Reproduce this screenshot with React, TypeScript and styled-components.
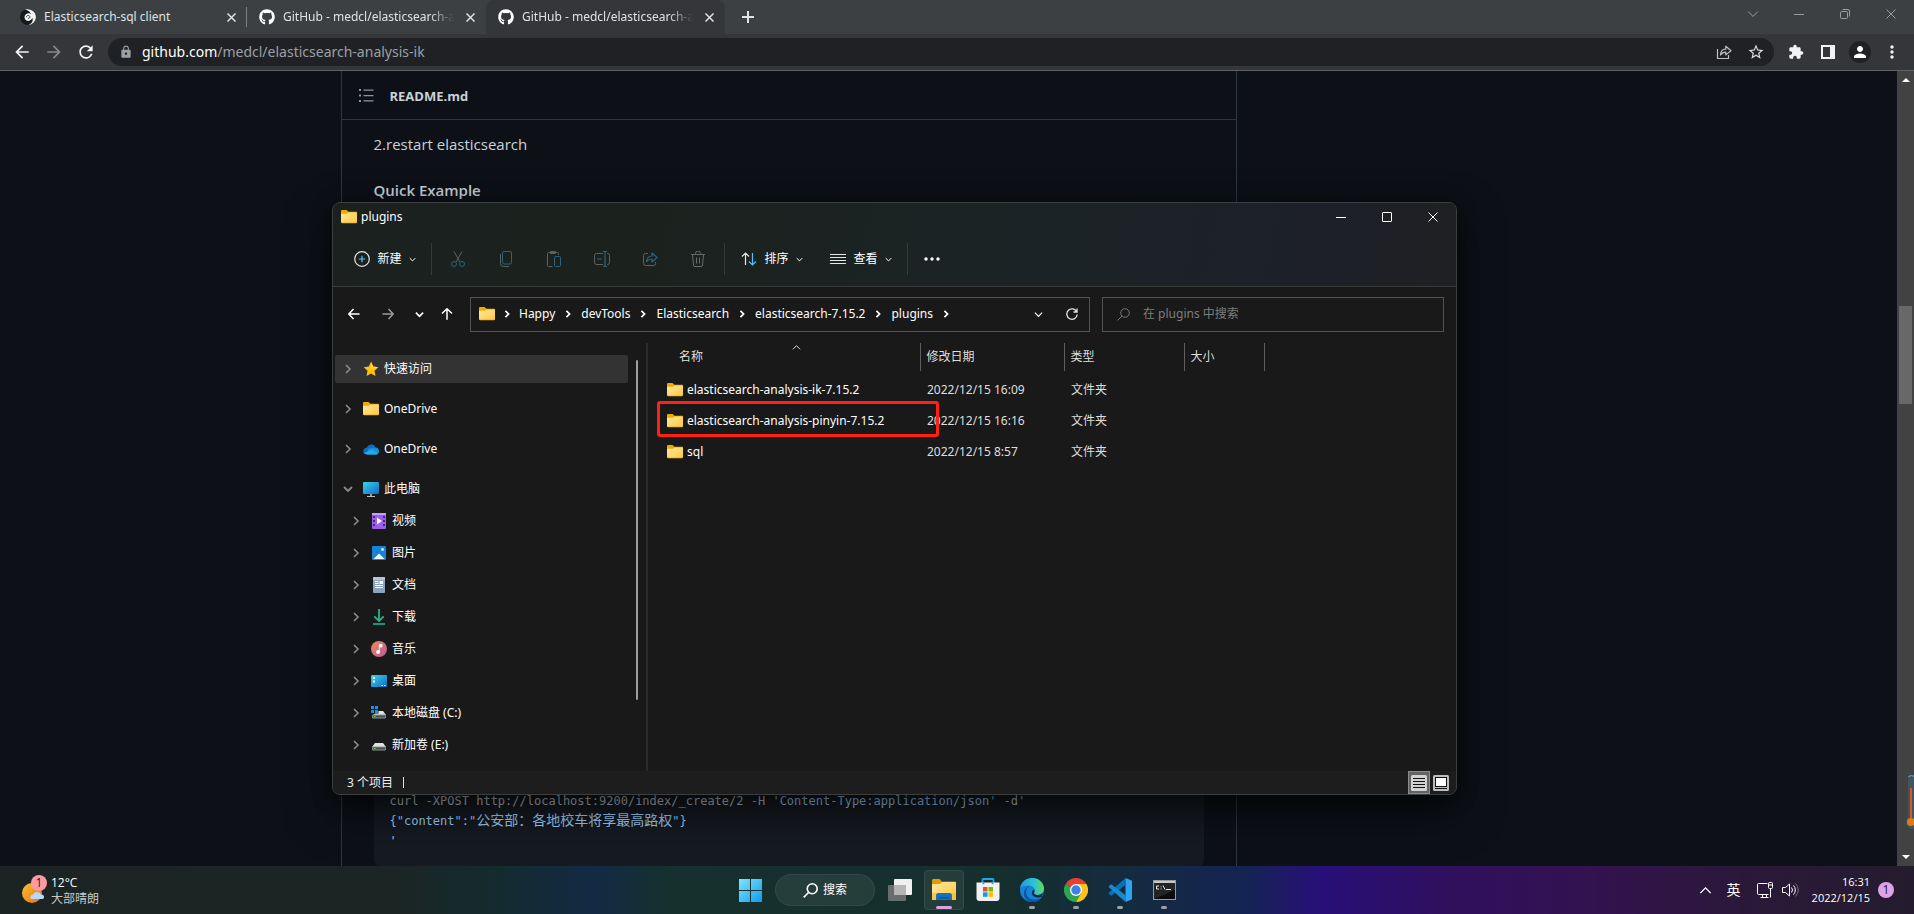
import React from 'react';
import styled, { createGlobalStyle, css } from 'styled-components';
import { FaGithub } from 'react-icons/fa';
import {
  MdArrowBack,
  MdArrowForward,
  MdExtension,
  MdLock,
  MdMoreVert,
  MdPerson,
  MdRefresh,
  MdStarBorder,
} from 'react-icons/md';

const GlobalStyle = createGlobalStyle`
  *, *::before, *::after { box-sizing: border-box; }
  body {
    margin: 0;
    background: #0d1117;
    color: #fff;
    font: 12px/16px "Noto Sans", "Noto Sans CJK SC", sans-serif;
  }
  button, input { font: inherit; color: inherit; }
  button { margin: 0; padding: 0; border: 0; background: none; cursor: default; }
  svg { display: block; flex: none; }
`;

const Screen = styled.div`
  display: flex;
  flex-direction: column;
  min-height: 100vh;
`;

/* ---------- Browser chrome ---------- */

const TabStrip = styled.div`
  display: flex;
  align-items: stretch;
  height: 34px;
  padding-left: 8px;
  background: #3c4043;
`;

const Tab = styled.div<{ $active?: boolean; $divided?: boolean }>`
  position: relative;
  display: flex;
  align-items: center;
  gap: 8px;
  flex: 0 1 239px;
  min-width: 0;
  padding: 0 8px 0 12px;
  color: #dfe1e5;
  ${(p) =>
    p.$active &&
    css`
      background: #35363a;
      border-radius: 8px 8px 0 0;
    `}
  ${(p) =>
    p.$divided &&
    css`
      &::after {
        content: '';
        position: absolute;
        right: 0;
        top: 7px;
        width: 1px;
        height: 20px;
        background: #7b7e82;
      }
    `}
`;

const TabTitle = styled.button<{ $fade?: boolean }>`
  flex: 1;
  min-width: 0;
  overflow: hidden;
  white-space: nowrap;
  text-align: left;
  ${(p) => p.$fade && css`mask-image: linear-gradient(90deg, #000 86%, transparent);`}
`;

const TinyButton = styled.button`
  display: grid;
  place-items: center;
  width: 16px;
  height: 16px;
`;

const NewTab = styled.button`
  display: grid;
  place-items: center;
  width: 28px;
  height: 34px;
  margin-left: 9px;
  color: #dfe1e5;
`;

const WindowControls = styled.div<{ $muted?: boolean }>`
  display: flex;
  margin-left: auto;
  color: ${(p) => (p.$muted ? '#9a9da0' : '#fff')};
`;

const ControlButton = styled.button`
  display: grid;
  place-items: center;
  width: 46px;
  height: 28px;
`;

const NavBar = styled.div`
  display: flex;
  align-items: center;
  height: 37px;
  padding: 0 6px 1px 6px;
  background: #35363a;
  border-bottom: 1px solid #5f6368;
  color: #f1f3f4;
`;

const NavButton = styled.button<{ $dim?: boolean }>`
  display: grid;
  place-items: center;
  width: 32px;
  height: 28px;
  color: ${(p) => (p.$dim ? '#86888b' : 'inherit')};
`;

const Omnibox = styled.div`
  display: flex;
  align-items: center;
  flex: 1;
  height: 28px;
  margin: 0 6px;
  padding: 0 2px 0 11px;
  border-radius: 14px;
  background: #202124;
  color: #9aa0a6;
`;

const Address = styled.button`
  flex: 1;
  padding-left: 9px;
  text-align: left;
  font-size: 14px;
  line-height: 20px;
  color: #9aa0a6;
  & > b {
    font-weight: 400;
    color: #fff;
  }
`;

const Avatar = styled.span`
  display: grid;
  place-items: center;
  width: 22px;
  height: 22px;
  border-radius: 50%;
  background: #202124;
`;

/* ---------- Page content ---------- */

const Viewport = styled.div`
  position: relative;
  display: flex;
  flex: 1;
  min-height: 0;
`;

const PageArea = styled.main`
  display: grid;
  grid-template-columns: minmax(0, 896px) 296px;
  column-gap: 24px;
  justify-content: center;
  flex: 1;
  font-family: "Open Sans", "Noto Sans CJK SC", sans-serif;
`;

const Readme = styled.article`
  display: flex;
  flex-direction: column;
  border: 1px solid #30363d;
  border-width: 0 1px;
  color: #c9d1d9;
`;

const ReadmeBar = styled.header`
  display: flex;
  align-items: center;
  gap: 16px;
  height: 49px;
  padding-left: 17px;
  border-bottom: 1px solid #30363d;
  color: #8b949e;
`;

const ReadmeName = styled.h2`
  margin: 0;
  padding-top: 2px;
  font-size: 13px;
  line-height: 20px;
  font-weight: 700;
  color: #c9d1d9;
`;

const ReadmeBody = styled.div`
  display: flex;
  flex-direction: column;
  flex: 1;
  padding: 12px 32px 0;
`;

const Paragraph = styled.p`
  margin: 0;
  font-size: 15px;
  line-height: 24px;
`;

const Heading = styled.h3`
  margin: 24px 0;
  font-size: 15px;
  line-height: 20px;
  font-weight: 600;
`;

const CodeBlock = styled.pre`
  margin: auto 0 0;
  padding: 16px 16px 15px;
  border-radius: 6px;
  background: #161b22;
  font: 12px/20px "DejaVu Sans Mono", "Noto Sans CJK SC", monospace;
  color: #a5d6ff;
  & > span {
    color: #c9d1d9;
  }
`;

const Han = styled.b`
  font-weight: 400;
  font-size: 14px;
  line-height: 16px;
`;

const ScrollTrack = styled.div`
  display: flex;
  flex-direction: column;
  align-items: center;
  justify-content: space-between;
  width: 17px;
  padding: 7px 0;
  background: #424242;
`;

const ScrollArrow = styled.span<{ $down?: boolean }>`
  border: 4px solid transparent;
  border-top-width: ${(p) => (p.$down ? 4 : 0)}px;
  border-bottom-width: ${(p) => (p.$down ? 0 : 4)}px;
  border-top-color: ${(p) => (p.$down ? '#fff' : 'transparent')};
  border-bottom-color: ${(p) => (p.$down ? 'transparent' : '#fff')};
`;

const ScrollLane = styled.div`
  display: flex;
  flex-direction: column;
  flex: 1;
`;

const ScrollThumb = styled.span`
  width: 13px;
  height: 98px;
  margin-top: 224px;
  background: #686868;
`;

const Thermometer = styled.div`
  position: absolute;
  right: 0;
  bottom: 36px;
  width: 9px;
  height: 56px;
  overflow: hidden;
`;

/* ---------- Explorer window ---------- */

const windowFrame = css`
  position: absolute;
  left: 332px;
  top: 131px;
  width: min(1125px, calc(100% - 340px));
  height: 593px;
  border-radius: 8px;
`;

const Explorer = styled.section`
  ${windowFrame}
  display: flex;
  flex-direction: column;
  overflow: hidden;
  border: 1px solid #3b3f40;
  background: #191919;
`;

const ExplorerShadow = styled.div`
  ${windowFrame}
  box-shadow: 0 18px 44px rgba(0, 0, 0, 0.6), 0 2px 20px rgba(0, 0, 0, 0.4);
`;

const ExplorerTop = styled.div`
  height: 84px;
  border-bottom: 1px solid #3a3b3b;
  background: linear-gradient(100deg, #1c2120 0%, #1b221d 22%, #1b2323 50%, #1c2227 72%, #1d202a 86%, #202023 100%);
`;

const TitleRow = styled.div`
  display: flex;
  align-items: flex-start;
`;

const WindowTitle = styled.div`
  display: flex;
  align-items: center;
  gap: 4px;
  padding: 6px 0 0 8px;
`;

const CommandBar = styled.div`
  display: flex;
  align-items: center;
  height: 56px;
  padding-left: 8px;
`;

const Command = styled.button<{ $w: number; $off?: boolean }>`
  display: flex;
  align-items: center;
  justify-content: center;
  gap: 7px;
  width: ${(p) => p.$w}px;
  height: 32px;
  opacity: ${(p) => (p.$off ? 0.5 : 1)};
`;

const CommandDivider = styled.span`
  width: 1px;
  height: 32px;
  margin: 0 2px;
  background: #343a39;
`;

const AddressRow = styled.div`
  display: flex;
  align-items: center;
  height: 54px;
  padding: 0 12px 0 6px;
`;

const Crumbs = styled.nav`
  display: flex;
  align-items: center;
  flex: 1 1 620px;
  min-width: 0;
  height: 35px;
  margin-left: 7px;
  padding-left: 8px;
  border: 1px solid #535353;
  white-space: nowrap;
`;

const Crumb = styled.a`
  color: #fff;
  text-decoration: none;
`;

const CrumbArrow = styled.span<{ $first?: boolean }>`
  display: grid;
  place-items: center;
  width: ${(p) => (p.$first ? 24 : 26)}px;
`;

const Spacer = styled.span`
  flex: 1;
`;

const SearchField = styled.label`
  display: flex;
  align-items: center;
  gap: 13px;
  flex: 0 1 342px;
  height: 35px;
  margin-left: 12px;
  padding: 0 14px;
  border: 1px solid #535353;
  color: #767676;
`;

const SearchInput = styled.input`
  flex: 1;
  min-width: 0;
  padding: 0;
  border: 0;
  outline: 0;
  background: none;
  font-size: 12px;
  line-height: 16px;
  &::placeholder {
    color: #7d7d7d;
    opacity: 1;
  }
`;

const Panes = styled.div`
  display: flex;
  flex: 1;
  min-height: 0;
  margin-top: 2px;
`;

const Tree = styled.nav`
  display: flex;
  flex-direction: column;
  width: 295px;
  padding: 12px 0 0 2px;
`;

const TreeItem = styled.button<{ $child?: boolean; $selected?: boolean }>`
  display: flex;
  align-items: center;
  gap: 5px;
  flex: none;
  height: ${(p) => (p.$child ? 24 : 28)}px;
  margin-bottom: ${(p) => (p.$child ? 8 : 12)}px;
  padding-left: ${(p) => (p.$child ? 16 : 8)}px;
  border-radius: 2px;
  text-align: left;
  color: #8a8a8a;
  background: ${(p) => (p.$selected ? '#333' : 'transparent')};
  & > svg:first-child {
    margin-right: 5px;
  }
  & > span {
    color: #fff;
  }
`;

const TreeGroup = styled.div`
  display: flex;
  flex-direction: column;
  margin-top: -6px;
`;

const TreeScroll = styled.div`
  display: flex;
  justify-content: center;
  width: 18px;
  padding-top: 17px;
`;

const TreeThumb = styled.span`
  width: 2px;
  height: 340px;
  border-radius: 1px;
  background: #9d9d9d;
`;

const Files = styled.div`
  flex: 1;
  min-width: 0;
  border-left: 2px solid #2b2b2b;
`;

const FileTable = styled.table`
  width: 616px;
  border-collapse: collapse;
  table-layout: fixed;
  color: #dedede;
  th {
    position: relative;
    height: 28px;
    padding: 0 0 0 6px;
    border-right: 1px solid #5f5f5f;
    font-weight: 400;
    text-align: left;
  }
  th:first-child { padding-left: 31px; }
  td {
    position: relative;
    height: 31px;
    padding: 0 0 0 7px;
    white-space: nowrap;
  }
  td:first-child { padding-left: 19px; }
  thead::after {
    content: '';
    display: block;
    height: 3px;
  }
`;

const SortMark = styled.span`
  position: absolute;
  left: 144px;
  top: 0;
`;

const FileName = styled.button`
  display: flex;
  align-items: center;
  gap: 4px;
  color: #fff;
`;

const Highlight = styled.span`
  position: absolute;
  z-index: 1;
  left: 9px;
  top: -4px;
  width: 282px;
  height: 36px;
  border: 3px solid #ff2114;
  border-radius: 3px;
`;

const StatusBar = styled.footer`
  display: flex;
  align-items: center;
  height: 23px;
  padding: 0 4px 0 14px;
  background: #1d1d1d;
  color: #ececec;
`;

const StatusTick = styled.span`
  width: 1px;
  height: 11px;
  margin-left: 10px;
  background: #e0e0e0;
`;

const ViewButton = styled.button<{ $on?: boolean }>`
  display: grid;
  place-items: center;
  width: 22px;
  height: 23px;
  border: 1px solid ${(p) => (p.$on ? '#8c8c8c' : 'transparent')};
  background: ${(p) => (p.$on ? '#636363' : 'transparent')};
`;

/* ---------- Taskbar ---------- */

const Taskbar = styled.footer`
  display: grid;
  grid-template-columns: 1fr auto 1fr;
  align-items: center;
  height: 48px;
  font-family: "Open Sans", "Noto Sans CJK SC", sans-serif;
  background: linear-gradient(
    90deg,
    #1c2423 0%,
    #1b2624 21%,
    #132b2f 26%,
    #132a44 31%,
    #15302d 35%,
    #142f2c 52%,
    #142b40 59%,
    #142452 65%,
    #280f78 69%,
    #30105c 76%,
    #331250 83%,
    #2b1839 91%,
    #241c2e 100%
  );
`;

const Weather = styled.button`
  display: flex;
  align-items: center;
  gap: 4px;
  margin-left: 21px;
  text-align: left;
  justify-self: start;
`;

const WeatherText = styled.span`
  display: flex;
  flex-direction: column;
  padding-top: 2px;
  & > span:last-child {
    color: #c6c9c9;
  }
`;

const Dock = styled.div`
  display: flex;
  align-items: center;
  gap: 4px;
`;

const DockButton = styled.button<{ $open?: boolean; $current?: boolean }>`
  position: relative;
  display: grid;
  place-items: center;
  width: 40px;
  height: 40px;
  border: 1px solid ${(p) => (p.$current ? 'rgba(255,255,255,.08)' : 'transparent')};
  border-radius: 4px;
  background: ${(p) => (p.$current ? 'rgba(255,255,255,.07)' : 'transparent')};
  ${(p) =>
    (p.$open || p.$current) &&
    css`
      &::after {
        content: '';
        position: absolute;
        bottom: 0;
        width: ${p.$current ? 16 : 6}px;
        height: 3px;
        border-radius: 2px;
        background: ${p.$current ? '#d9a1e4' : '#98a1a6'};
      }
    `}
`;

const DockSearch = styled.button`
  display: flex;
  align-items: center;
  justify-content: center;
  gap: 5px;
  width: 100px;
  height: 32px;
  margin: 0 1px;
  border: 1px solid rgba(255, 255, 255, 0.06);
  border-radius: 16px;
  background: rgba(255, 255, 255, 0.07);
`;

const Tray = styled.div`
  display: flex;
  align-items: center;
  justify-self: end;
  padding-right: 20px;
`;

const TrayButton = styled.button<{ $w: number }>`
  display: grid;
  place-items: center;
  width: ${(p) => p.$w}px;
  height: 32px;
  font-size: 14px;
`;

const Clock = styled.button`
  display: flex;
  flex-direction: column;
  margin: 0 8px 0 10px;
  font-size: 11px;
  line-height: 16px;
  text-align: right;
`;

const Count = styled.button`
  width: 16px;
  height: 16px;
  border-radius: 50%;
  background: #dda3e6;
  color: #241c2e;
  text-align: center;
`;

/* ---------- Drawings ---------- */

const Close = ({ s = 8, w = 1 }: { s?: number; w?: number }) => (
  <svg width={s} height={s} viewBox="0 0 10 10" stroke="currentColor" strokeWidth={(w * 10) / s} fill="none">
    <path d="M.5 .5l9 9M9.5 .5l-9 9" />
  </svg>
);

const Chevron = ({ dir, s = 8, w = 1.2 }: { dir: 'up' | 'down' | 'right'; s?: number; w?: number }) => (
  <svg width={s} height={s} viewBox="0 0 10 10" fill="none" stroke="currentColor" strokeWidth={(w * 10) / s}>
    <path d={dir === 'up' ? 'M1 7l4-4 4 4' : dir === 'down' ? 'M1 3l4 4 4-4' : 'M3 1l4 4-4 4'} />
  </svg>
);

const Minimize = () => (
  <svg width="10" height="10" stroke="currentColor"><path d="M0 5.5h10" /></svg>
);

const Maximize = () => (
  <svg width="10" height="10" stroke="currentColor" fill="none"><rect x=".5" y=".5" width="9" height="9" rx=".5" /></svg>
);

const Restore = () => (
  <svg width="10" height="10" stroke="currentColor" fill="none">
    <rect x=".5" y="2.5" width="7" height="7" rx="1" />
    <path d="M2.5 .5h5.5a1.500 1.500 0 0 1 1.500 1.500V7.500" />
  </svg>
);

const SwirlFavicon = () => (
  <svg width="16" height="16" viewBox="0 0 16 16">
    <circle cx="8" cy="8" r="8" fill="#17181a" />
    <path d="M5 .600C10-1 15.500 2 15.900 7.500 16.200 12 12.500 15.800 8.500 16c3.500-1.500 5-4.500 3.800-7-1 2.500-3.800 3.600-6 2.400C4 10 4 6.500 6.200 5 8 3.900 10 4.300 11 5.500 10.500 3 8 1.200 5 .600z" fill="#f4f4f4" />
    <path d="M6.300 8.300c0-2.200 3.200-2.500 3.500-.500.200 1.300-1 1.900-1.900 1.300" fill="none" stroke="#333" />
  </svg>
);

const SharePage = () => (
  <svg width="16" height="16" viewBox="0 0 16 16" fill="none" stroke="#bdc1c6" strokeWidth="1.200">
    <path d="M1.500 5v9.500h11V11" />
    <path d="M4.500 11C4.500 7 6.500 5.200 9.800 5.200V2.200L15 6.700l-5.200 4.200V8.200C7.500 8.200 5.800 9 4.500 11z" strokeLinejoin="round" />
  </svg>
);

const SidePanel = () => (
  <svg width="14" height="14"><path d="M0 0h14v14H0zM2 2v10h7V2z" fill="#f1f3f4" fillRule="evenodd" /></svg>
);

const ListIcon = () => (
  <svg width="15" height="13" fill="#8b949e">
    <path d="M0 0h2v2H0zM0 5.500h2v2H0zM0 11h2v2H0zM4.500 .500h10v1.200h-10zM4.500 6h10v1.200h-10zM4.500 11.300h10v1.200h-10z" />
  </svg>
);

const Folder = () => (
  <svg width="16" height="14" viewBox="0 0 16 14">
    <defs>
      <linearGradient id="folderFace" x1="0" y1="0" x2="1" y2="1">
        <stop offset="0" stopColor="#ffe9a0" />
        <stop offset="1" stopColor="#ffc83d" />
      </linearGradient>
    </defs>
    <path d="M0 1.200C0 .500.500 0 1.200 0h4.300L7.500 1.800H15c.600 0 1 .400 1 1V8H0z" fill="#f5a800" />
    <path d="M0 3.800h6L7.600 2.500H15c.600 0 1 .400 1 1V12c0 .700-.500 1-1 1H1c-.600 0-1-.400-1-1z" fill="url(#folderFace)" />
    <path d="M.300 12.300c.200.500.500.700 1 .700h13.500c.500 0 .800-.200 1-.700" stroke="#d99a10" strokeWidth=".600" fill="none" />
  </svg>
);

const Star = () => (
  <svg width="16" height="16" viewBox="0 0 16 16">
    <path d="M8 .800l2.200 4.800 5.100.600-3.800 3.600 1 5.200L8 12.500 3.500 15l1-5.200L.700 6.200l5.100-.600z" fill="#ffc20a" />
    <path d="M8 .800l2.200 4.800 5.100.600L8 9z" fill="#ffd43b" />
  </svg>
);

const Cloud = () => (
  <svg width="16" height="11" viewBox="0 0 16 11">
    <path d="M4 3.500C5 1 7.300 0 9.300.500c1.700.400 2.800 1.500 3.200 3L8 8 1 9.500C-.800 7 .800 3.700 4 3.500z" fill="#0f6cc4" />
    <path d="M5.500 4.500l7-1C15 3.500 16 5.500 16 7.300 15.900 9.500 14.500 10.500 13 10.500H4z" fill="#1490df" />
    <path d="M1 9.300L9 5.200l6 4.300c-.500.600-1.200 1-2 1H4c-1.400 0-2.400-.500-3-1.200z" fill="#28a8ea" />
  </svg>
);

const Monitor = () => (
  <svg width="16" height="16" viewBox="0 0 16 16">
    <defs>
      <linearGradient id="screenFill" x1="0" y1="0" x2="1" y2="1">
        <stop offset="0" stopColor="#39d5e6" />
        <stop offset="1" stopColor="#1268c8" />
      </linearGradient>
    </defs>
    <rect y="1" width="16" height="12" rx="1" fill="url(#screenFill)" />
    <path d="M7.200 13h1.600v2H7.200zM4 15h8v1H4z" fill="#b8bec4" />
  </svg>
);

const Video = () => (
  <svg width="16" height="16" viewBox="0 0 16 16">
    <rect x="1" width="14" height="16" rx="1" fill="#9b5fe6" />
    <rect x="1" width="14" height="2" fill="#c79bff" />
    <path d="M2 3h2v2H2zM2 7h2v2H2zM2 11h2v2H2zM12 3h2v2h-2zM12 7h2v2h-2zM12 11h2v2h-2z" fill="#4b2494" />
    <path d="M6 4.500l5 3.500-5 3.500z" fill="#fff" />
  </svg>
);

const Picture = () => (
  <svg width="16" height="16" viewBox="0 0 16 16">
    <rect x="1" y="1" width="14" height="14" rx="1" fill="#1683d4" />
    <path d="M2.500 14L8 8.500l5.500 5.500z" fill="#f2f8ff" />
    <circle cx="11.500" cy="4.500" r="1.400" fill="#d9efff" />
  </svg>
);

const Doc = () => (
  <svg width="16" height="16" viewBox="0 0 16 16">
    <rect x="2" width="12" height="16" rx="1" fill="#8ba4bf" />
    <path d="M2 1a1 1 0 0 1 1-1h10a1 1 0 0 1 1 1v2H2z" fill="#b3c6da" />
    <path d="M4 4.500h3.500M4 6.500h3.500M4 8.500h8M4 10.500h8" stroke="#fff" />
    <rect x="8.500" y="4" width="3.500" height="3" fill="#fff" />
  </svg>
);

const Download = () => (
  <svg width="16" height="16" viewBox="0 0 16 16" fill="none" strokeWidth="1.800">
    <path d="M8 0v12M3.300 7.300L8 12l4.700-4.700" stroke="#22b58a" />
    <path d="M2 15h12" stroke="#14a38b" />
  </svg>
);

const Music = () => (
  <svg width="16" height="16" viewBox="0 0 16 16">
    <defs>
      <linearGradient id="discFill" x1="0" y1="0" x2="1" y2="1">
        <stop offset="0" stopColor="#f08b52" />
        <stop offset="1" stopColor="#b45b9f" />
      </linearGradient>
    </defs>
    <circle cx="8" cy="8" r="8" fill="url(#discFill)" />
    <circle cx="7" cy="11" r="1.900" fill="#fff" />
    <path d="M8.300 11V3.500h2.700V6H8.300" fill="#fff" stroke="#fff" strokeWidth=".800" />
  </svg>
);

const Desktop = () => (
  <svg width="16" height="16" viewBox="0 0 16 16">
    <rect y="2" width="16" height="12" rx="1" fill="url(#screenFill)" />
    <path d="M2 4h2v2H2zM2 7.500h2v2H2z" fill="#fff" />
    <path d="M10.500 12.500h1.500M13 12.500h1.500" stroke="#fff" />
  </svg>
);

const Drive = ({ system }: { system?: boolean }) => (
  <svg width="16" height="16" viewBox="0 0 16 16">
    {system && <path d="M0 1h3v3H0zM4 1h3v3H4zM0 5h3v3H0zM4 5h3v3H4z" fill="#1f8fe0" />}
    <path d={system ? 'M7.500 6H12l3 4H2l2-1.500h3.500z' : 'M4 6h8l3 4H1z'} fill="#e0e2e4" />
    <rect x="1" y="9.500" width="14" height="4" rx="1" fill="#8b8e90" />
    <rect x="2" y="10.500" width="12" height="2" fill="#4b4e50" />
    <rect x="3" y="11" width="1.500" height="1" fill="#52e052" />
  </svg>
);

const PlusCircle = () => (
  <svg width="16" height="16" viewBox="0 0 16 16" fill="none">
    <circle cx="8" cy="8" r="7.300" stroke="#e6e6e6" strokeWidth="1.200" />
    <path d="M8 4.800v6.400M4.800 8h6.400" stroke="#4cc2ff" strokeWidth="1.200" />
  </svg>
);

const Cut = () => (
  <svg width="16" height="16" viewBox="0 0 16 16" fill="none">
    <path d="M4 .500l6 10.500M12 .500L6 11" stroke="#a0a0a0" />
    <circle cx="4" cy="13" r="2.500" stroke="#3fa4d8" />
    <circle cx="12" cy="13" r="2.500" stroke="#3fa4d8" />
  </svg>
);

const Copy = () => (
  <svg width="16" height="16" viewBox="0 0 16 16" fill="none">
    <rect x="4.500" y=".500" width="9" height="12.500" rx="1.500" stroke="#3fa4d8" />
    <path d="M2.500 3v9.500a3 3 0 0 0 3 3H11" stroke="#a0a0a0" />
  </svg>
);

const Paste = () => (
  <svg width="16" height="16" viewBox="0 0 16 16" fill="none">
    <path d="M6.500 15.500h-4a1 1 0 0 1-1-1v-12a1 1 0 0 1 1-1h9a1 1 0 0 1 1 1V4M4.500.500h5v2h-5z" stroke="#a0a0a0" />
    <rect x="8.500" y="5.500" width="6" height="10" rx="1" stroke="#3fa4d8" />
  </svg>
);

const Rename = () => (
  <svg width="16" height="16" viewBox="0 0 16 16" fill="none">
    <path d="M9 2.500H2.500a2 2 0 0 0-2 2v7a2 2 0 0 0 2 2H9M13 2.500h.500a2 2 0 0 1 2 2v7a2 2 0 0 1-2 2H13" stroke="#a0a0a0" />
    <path d="M11 1v14M9 .500h4M9 15.500h4M3 8h5" stroke="#3fa4d8" strokeWidth="1.200" />
  </svg>
);

const Share = () => (
  <svg width="16" height="16" viewBox="0 0 16 16" fill="none">
    <path d="M6 2.500H3.500a2 2 0 0 0-2 2v8a2 2 0 0 0 2 2h8a2 2 0 0 0 2-2V11" stroke="#a0a0a0" />
    <path d="M4.500 10.500C5 7 7 5 10 5V2l5 4.500-5 4.500V8C7.500 8 6 8.800 4.500 10.500z" stroke="#3fa4d8" strokeWidth="1.200" strokeLinejoin="round" />
  </svg>
);

const Trash = () => (
  <svg width="16" height="16" viewBox="0 0 16 16" fill="none" stroke="#b4b4b4">
    <path d="M1 3.500h14M5.500 3.500v-1a2 2 0 0 1 5 0v1M2.500 3.500l1 10.500a1.500 1.500 0 0 0 1.500 1.500h6a1.500 1.500 0 0 0 1.500-1.500l1-10.500M6.500 6.500v6M9.500 6.500v6" />
  </svg>
);

const Sort = () => (
  <svg width="16" height="14" viewBox="0 0 16 14" fill="none" strokeWidth="1.200">
    <path d="M4.500 13V1M1 4.500L4.500 1 8 4.500" stroke="#e6e6e6" />
    <path d="M11.500 1v12M8 9.500l3.500 3.500L15 9.500" stroke="#4cc2ff" />
  </svg>
);

const Lines = () => (
  <svg width="16" height="12" stroke="#e6e6e6"><path d="M0 1.500h16M0 4.500h16M0 7.500h16M0 10.500h16" /></svg>
);

const Dots = () => (
  <svg width="16" height="4" fill="#fff"><circle cx="2" cy="2" r="1.700" /><circle cx="8" cy="2" r="1.700" /><circle cx="14" cy="2" r="1.700" /></svg>
);

const Arrow = ({ dir, dim }: { dir: 'left' | 'right' | 'up'; dim?: boolean }) => (
  <svg width="12" height="12" viewBox="0 0 12 12" fill="none" stroke={dim ? '#9a9a9a' : '#fff'} strokeWidth="1.500">
    <path
      d={
        dir === 'left'
          ? 'M11.500 6H1M5.500 1L.800 6l4.700 5'
          : dir === 'right'
            ? 'M.500 6H11M6.500 1l4.700 5-4.700 5'
            : 'M6 11.800V1M1 5.500L6 .800l5 4.700'
      }
    />
  </svg>
);

const Reload = () => (
  <svg width="12" height="12" viewBox="0 0 12 12" fill="none" stroke="#e6e6e6" strokeWidth="1.300">
    <path d="M10.800 4A5.200 5.200 0 1 0 11.200 6.500M11 .500V4H7.500" />
  </svg>
);

const Magnifier = ({ s = 13, w = 1 }: { s?: number; w?: number }) => (
  <svg width={s} height={s} viewBox="0 0 13 13" fill="none" stroke="currentColor" strokeWidth={w}>
    <circle cx="8" cy="5" r="4.300" />
    <path d="M5 8L.600 12.400" />
  </svg>
);

const ListView = () => (
  <svg width="16" height="16">
    <rect width="16" height="16" rx="1.500" fill="#d2d2d2" />
    <path d="M2 3.500h12M2 6.500h12M2 9.500h12M2 12.500h12" stroke="#111" />
  </svg>
);

const TileView = () => (
  <svg width="16" height="16">
    <rect width="16" height="16" rx="1.500" fill="#bdbdbd" />
    <rect x="2.500" y="2.500" width="11" height="9" fill="#fff" stroke="#111" />
    <path d="M2 13.500h12" stroke="#111" />
  </svg>
);

const WeatherIcon = () => (
  <svg width="26" height="30" viewBox="0 0 26 30">
    <defs>
      <linearGradient id="sunFill" x1="0" y1="0" x2="1" y2="1">
        <stop offset="0" stopColor="#f7c331" />
        <stop offset="1" stopColor="#ec6c12" />
      </linearGradient>
    </defs>
    <circle cx="11" cy="18" r="10" fill="url(#sunFill)" />
    <path d="M10 24a2.800 2.800 0 0 1 2-4.500 4.500 4.500 0 0 1 8 0 2.500 2.500 0 0 1 2 4.500z" fill="#b9d8fa" />
    <circle cx="18" cy="8" r="8" fill="#ff99a4" />
    <text x="18" y="12" fontSize="12" textAnchor="middle" fill="#222">1</text>
  </svg>
);

const StartLogo = () => (
  <svg width="23" height="23">
    <defs>
      <linearGradient id="startFill" x1="0" y1="0" x2="1" y2="1">
        <stop offset="0" stopColor="#7fe6fb" />
        <stop offset="1" stopColor="#1199f0" />
      </linearGradient>
    </defs>
    <path d="M0 0h11v11H0zM12 0h11v11H12zM0 12h11v11H0zM12 12h11v11H12z" fill="url(#startFill)" />
  </svg>
);

const TaskView = () => (
  <svg width="24" height="22">
    <rect x="6" width="18" height="16" rx="1" fill="#f0f0f0" />
    <rect y="6" width="18" height="16" rx="1" fill="#6a6d6e" />
    <path d="M6 6h12v10H6z" fill="#b4b6b6" />
  </svg>
);

const BigFolder = () => (
  <svg width="24" height="22" viewBox="0 0 24 22">
    <path d="M0 1.500C0 .700.600 0 1.500 0h6L10 2.500V6H0z" fill="#e09c05" />
    <path d="M0 5h8l2.500-2.200H23c.600 0 1 .400 1 1V20c0 .600-.400 1-1 1H1c-.600 0-1-.400-1-1z" fill="url(#folderFace)" />
    <path d="M0 14h24v6c0 .600-.400 1-1 1H1c-.600 0-1-.400-1-1z" fill="#fbbf2c" opacity=".700" />
    <path d="M4 21v-4.500A2.500 2.500 0 0 1 6.500 14h11a2.500 2.500 0 0 1 2.500 2.500V21z" fill="#1173c4" />
    <path d="M7 18h10v1.500H7z" fill="#0b559a" />
  </svg>
);

const StoreLogo = () => (
  <svg width="24" height="24" viewBox="0 0 24 24">
    <path d="M6.500 6V1.800c0-.500.300-.800.800-.800h9.400c.500 0 .800.300.800.800V6" fill="none" stroke="#1aa5ec" strokeWidth="1.800" />
    <path d="M.500 4.500h23V20a3 3 0 0 1-3 3h-17a3 3 0 0 1-3-3z" fill="#f1f1f1" />
    <path d="M6.500 4.500h1.800v1.800H6.500zM15.700 4.500h1.800v1.800h-1.800z" fill="#1aa5ec" />
    <path d="M7 9h4.500v4.500H7z" fill="#f25022" />
    <path d="M12.500 9H17v4.500h-4.500z" fill="#7fba00" />
    <path d="M7 14.300h4.500v4.500H7z" fill="#00a4ef" />
    <path d="M12.500 14.300H17v4.500h-4.500z" fill="#ffb900" />
  </svg>
);

const EdgeLogo = () => (
  <svg width="24" height="24" viewBox="0 0 24 24">
    <defs>
      <linearGradient id="edgeTop" x1="0" y1=".500" x2="1" y2=".500">
        <stop offset="0" stopColor="#1b9de2" />
        <stop offset=".600" stopColor="#2fc5cf" />
        <stop offset="1" stopColor="#62dc52" />
      </linearGradient>
    </defs>
    <circle cx="12" cy="12" r="12" fill="#1584d8" />
    <path d="M.200 10C1.200 4 6 0 12 0c7 0 12 5 12 10.500 0 4-3 6.500-6.500 6.500-2.800 0-4-1.200-3.500-2.200 1.700-2 .700-5.800-3-6.800C6.500 6.800 1.500 8 .200 10z" fill="url(#edgeTop)" />
    <path d="M10.500 8C5 9 5 16 8.500 19.500c3 3 8.500 3 13 0C18 25.500 10 25.500 6 21 2 16.500 4 8.500 10.500 8z" fill="#0b56a4" />
    <path d="M14 14.800c-.500 1 .700 2.200 3.500 2.200 2.400 0 4.500-1.100 5.700-2.800l-1.500 4.600c-4 1.500-8.700.700-9.700-3-.300-1.800.500-3.500 2-4.300.800 1.300.800 2.500 0 3.300z" fill="#132a44" />
  </svg>
);

const ChromeLogo = () => (
  <svg width="24" height="24" viewBox="0 0 24 24">
    <path d="M12 12L1.600 6A12 12 0 0 1 22.400 6z" fill="#e8402f" />
    <path d="M12 12L1.600 6A12 12 0 0 0 12 24l5.200-9z" fill="#2da44e" />
    <path d="M12 12l0-6h10.400A12 12 0 0 1 12 24l5.200-9z" fill="#fcc31e" />
    <circle cx="12" cy="12" r="6" fill="#fff" />
    <circle cx="12" cy="12" r="4.700" fill="#3b82ee" />
  </svg>
);

const CodeLogo = () => (
  <svg width="24" height="24" viewBox="0 0 24 24">
    <path d="M17.500 0L24 2.800v18.400L17.500 24z" fill="#2fa4ee" />
    <path d="M17.500 0L1 14.500c-.500.500-.500 1 0 1.500l1.500 1.300c.400.400 1 .400 1.400 0L18 6.500z" fill="#0a71b8" />
    <path d="M17.500 24L1 9.500c-.500-.500-.500-1 0-1.500l1.500-1.300c.400-.400 1-.400 1.400 0L18 17.500z" fill="#1689d0" />
  </svg>
);

const TerminalLogo = () => (
  <svg width="23" height="20" viewBox="0 0 23 20">
    <rect x=".500" y=".500" width="22" height="19" fill="#0c0c0c" stroke="#9a9a9a" />
    <path d="M1 1h21v2H1z" fill="#c8c8c8" />
    <path d="M6 6H3.500v3H6M8 6.500v.800M8 8.500v.800M10 5.500l2 4M13 9.500h5" fill="none" stroke="#e8e8e8" />
    <path d="M1 19l21-9V3H1z" fill="#fff" opacity=".100" />
  </svg>
);

const NetworkIcon = () => (
  <svg width="16" height="16" fill="none" stroke="#fff">
    <path d="M10.500 1.500h-9a1 1 0 0 0-1 1v9a1 1 0 0 0 1 1h10M5.500 12.500v3M9.500 12.500v3M3.500 15.500h8" />
    <rect x="11.500" y=".500" width="4" height="6" rx="1" />
    <path d="M12 3h3M13.500 6.500v9" />
  </svg>
);

const SpeakerIcon = () => (
  <svg width="17" height="14" fill="none" stroke="#fff">
    <path d="M.500 4.500h3l4-3.500v12l-4-3.500h-3zM9.500 4.500a4 4 0 0 1 0 5M11.500 2.500a6.500 6.500 0 0 1 0 9" />
    <path d="M13.500.500a9 9 0 0 1 0 13" stroke="#7b6a86" />
  </svg>
);

/* ---------- Data ---------- */

const crumbs = ['Happy', 'devTools', 'Elasticsearch', 'elasticsearch-7.15.2', 'plugins'];

const disk: { label: string; icon: React.ReactNode }[] = [
  { label: '视频', icon: <Video /> },
  { label: '图片', icon: <Picture /> },
  { label: '文档', icon: <Doc /> },
  { label: '下载', icon: <Download /> },
  { label: '音乐', icon: <Music /> },
  { label: '桌面', icon: <Desktop /> },
  { label: '本地磁盘 (C:)', icon: <Drive system /> },
  { label: '新加卷 (E:)', icon: <Drive /> },
];

const files = [
  { name: 'elasticsearch-analysis-ik-7.15.2', date: '2022/12/15 16:09' },
  { name: 'elasticsearch-analysis-pinyin-7.15.2', date: '2022/12/15 16:16', marked: true },
  { name: 'sql', date: '2022/12/15 8:57' },
];

/* ---------- Sections ---------- */

const BrowserTop = () => (
  <header>
    <TabStrip>
      <Tab $divided>
        <SwirlFavicon />
        <TabTitle>Elasticsearch-sql client</TabTitle>
        <TinyButton aria-label="Close tab"><Close s={9} w={1.5} /></TinyButton>
      </Tab>
      <Tab>
        <FaGithub size={16} color="#fff" />
        <TabTitle $fade>GitHub - medcl/elasticsearch-analysis-ik</TabTitle>
        <TinyButton aria-label="Close tab"><Close s={9} w={1.5} /></TinyButton>
      </Tab>
      <Tab $active>
        <FaGithub size={16} color="#fff" />
        <TabTitle $fade>GitHub - medcl/elasticsearch-analysis-ik</TabTitle>
        <TinyButton aria-label="Close tab"><Close s={9} w={1.5} /></TinyButton>
      </Tab>
      <NewTab aria-label="New tab">
        <svg width="12" height="12" stroke="currentColor" strokeWidth="2"><path d="M6 0v12M0 6h12" /></svg>
      </NewTab>
      <WindowControls $muted>
        <ControlButton aria-label="Search tabs"><Chevron dir="down" s={12} w={1} /></ControlButton>
        <ControlButton aria-label="Minimize"><Minimize /></ControlButton>
        <ControlButton aria-label="Restore"><Restore /></ControlButton>
        <ControlButton aria-label="Close"><Close s={10} /></ControlButton>
      </WindowControls>
    </TabStrip>
    <NavBar>
      <NavButton aria-label="Back"><MdArrowBack size={20} /></NavButton>
      <NavButton aria-label="Forward" $dim><MdArrowForward size={20} /></NavButton>
      <NavButton aria-label="Reload"><MdRefresh size={20} /></NavButton>
      <Omnibox>
        <MdLock size={14} />
        <Address><b>github.com</b>/medcl/elasticsearch-analysis-ik</Address>
        <NavButton aria-label="Share"><SharePage /></NavButton>
        <NavButton aria-label="Bookmark"><MdStarBorder size={18} color="#dadce0" /></NavButton>
      </Omnibox>
      <NavButton aria-label="Extensions"><MdExtension size={16} /></NavButton>
      <NavButton aria-label="Side panel"><SidePanel /></NavButton>
      <NavButton aria-label="Profile"><Avatar><MdPerson size={18} color="#fff" /></Avatar></NavButton>
      <NavButton aria-label="Menu"><MdMoreVert size={20} /></NavButton>
    </NavBar>
  </header>
);

const ExplorerWindow = () => (
  <Explorer>
    <ExplorerTop>
      <TitleRow>
        <WindowTitle><Folder />plugins</WindowTitle>
        <WindowControls>
          <ControlButton aria-label="Minimize"><Minimize /></ControlButton>
          <ControlButton aria-label="Maximize"><Maximize /></ControlButton>
          <ControlButton aria-label="Close"><Close s={10} /></ControlButton>
        </WindowControls>
      </TitleRow>
      <CommandBar>
        <Command $w={88}><PlusCircle />新建<Chevron dir="down" s={7} w={1} /></Command>
        <CommandDivider />
        <Command $w={48} $off aria-label="剪切"><Cut /></Command>
        <Command $w={48} $off aria-label="复制"><Copy /></Command>
        <Command $w={48} $off aria-label="粘贴"><Paste /></Command>
        <Command $w={48} $off aria-label="重命名"><Rename /></Command>
        <Command $w={48} $off aria-label="共享"><Share /></Command>
        <Command $w={48} $off aria-label="删除"><Trash /></Command>
        <CommandDivider />
        <Command $w={90}><Sort />排序<Chevron dir="down" s={7} w={1} /></Command>
        <Command $w={88}><Lines />查看<Chevron dir="down" s={7} w={1} /></Command>
        <CommandDivider />
        <Command $w={44} aria-label="更多"><Dots /></Command>
      </CommandBar>
    </ExplorerTop>
    <AddressRow>
      <Command $w={30} aria-label="后退"><Arrow dir="left" /></Command>
      <Command $w={38} aria-label="前进"><Arrow dir="right" dim /></Command>
      <Command $w={24} aria-label="最近"><Chevron dir="down" s={9} w={1.7} /></Command>
      <Command $w={32} aria-label="向上"><Arrow dir="up" /></Command>
      <Crumbs>
        <Folder />
        <CrumbArrow $first><Chevron dir="right" s={8} w={1.7} /></CrumbArrow>
        {crumbs.map((c) => (
          <React.Fragment key={c}>
            <Crumb href="#">{c}</Crumb>
            <CrumbArrow><Chevron dir="right" s={8} w={1.7} /></CrumbArrow>
          </React.Fragment>
        ))}
        <Spacer />
        <Command $w={34} aria-label="展开"><Chevron dir="down" s={9} w={1.2} /></Command>
        <Command $w={34} aria-label="刷新"><Reload /></Command>
      </Crumbs>
      <SearchField>
        <Magnifier />
        <SearchInput aria-label="搜索" placeholder="在 plugins 中搜索" />
      </SearchField>
    </AddressRow>
    <Panes>
      <Tree>
        <TreeItem $selected><Chevron dir="right" s={10} w={1.6} /><Star /><span>快速访问</span></TreeItem>
        <TreeItem><Chevron dir="right" s={10} w={1.6} /><Folder /><span>OneDrive</span></TreeItem>
        <TreeItem><Chevron dir="right" s={10} w={1.6} /><Cloud /><span>OneDrive</span></TreeItem>
        <TreeItem><Chevron dir="down" s={10} w={1.8} /><Monitor /><span>此电脑</span></TreeItem>
        <TreeGroup>
          {disk.map((d) => (
            <TreeItem key={d.label} $child>
              <Chevron dir="right" s={10} w={1.6} />{d.icon}<span>{d.label}</span>
            </TreeItem>
          ))}
        </TreeGroup>
      </Tree>
      <TreeScroll><TreeThumb /></TreeScroll>
      <Files>
        <FileTable>
          <colgroup>
            <col width={272} />
            <col width={144} />
            <col width={120} />
            <col width={80} />
          </colgroup>
          <thead>
            <tr>
              <th scope="col">名称<SortMark><Chevron dir="up" s={9} w={1} /></SortMark></th>
              <th scope="col">修改日期</th>
              <th scope="col">类型</th>
              <th scope="col">大小</th>
            </tr>
          </thead>
          <tbody>
            {files.map((f) => (
              <tr key={f.name}>
                <td>
                  <FileName><Folder />{f.name}</FileName>
                  {f.marked && <Highlight />}
                </td>
                <td>{f.date}</td>
                <td>文件夹</td>
                <td />
              </tr>
            ))}
          </tbody>
        </FileTable>
      </Files>
    </Panes>
    <StatusBar>
      3 个项目
      <StatusTick />
      <Spacer />
      <ViewButton $on aria-label="详细信息"><ListView /></ViewButton>
      <ViewButton aria-label="大图标"><TileView /></ViewButton>
    </StatusBar>
  </Explorer>
);

const SystemBar = () => (
  <Taskbar>
    <Weather>
      <WeatherIcon />
      <WeatherText><span>12°C</span><span>大部晴朗</span></WeatherText>
    </Weather>
    <Dock>
      <DockButton aria-label="开始"><StartLogo /></DockButton>
      <DockSearch><Magnifier s={15} w={1.4} />搜索</DockSearch>
      <DockButton aria-label="任务视图"><TaskView /></DockButton>
      <DockButton aria-label="文件资源管理器" $current><BigFolder /></DockButton>
      <DockButton aria-label="Microsoft Store"><StoreLogo /></DockButton>
      <DockButton aria-label="Edge" $open><EdgeLogo /></DockButton>
      <DockButton aria-label="Chrome" $open><ChromeLogo /></DockButton>
      <DockButton aria-label="Code" $open><CodeLogo /></DockButton>
      <DockButton aria-label="命令提示符" $open><TerminalLogo /></DockButton>
    </Dock>
    <Tray>
      <TrayButton $w={24} aria-label="隐藏的图标"><Chevron dir="up" s={13} w={1.3} /></TrayButton>
      <TrayButton $w={32}>英</TrayButton>
      <TrayButton $w={30} aria-label="网络"><NetworkIcon /></TrayButton>
      <TrayButton $w={22} aria-label="音量"><SpeakerIcon /></TrayButton>
      <Clock><span>16:31</span><span>2022/12/15</span></Clock>
      <Count>1</Count>
    </Tray>
  </Taskbar>
);

export default function App() {
  return (
    <Screen>
      <GlobalStyle />
      <BrowserTop />
      <Viewport>
        <PageArea>
          <Readme>
            <ReadmeBar><ListIcon /><ReadmeName>README.md</ReadmeName></ReadmeBar>
            <ReadmeBody>
              <Paragraph>2.restart elasticsearch</Paragraph>
              <Heading>Quick Example</Heading>
              <CodeBlock>
                <span>curl -XPOST http://localhost:9200/index/_create/2 -H </span>
                {"'Content-Type:application/json'"}
                <span> -d</span>
                {"'\n{\"content\":\""}
                <Han>公安部：各地校车将享最高路权</Han>
                {"\"}\n'"}
              </CodeBlock>
            </ReadmeBody>
          </Readme>
        </PageArea>
        <ScrollTrack>
          <ScrollArrow />
          <ScrollLane><ScrollThumb /></ScrollLane>
          <ScrollArrow $down />
        </ScrollTrack>
        <ExplorerShadow />
        <ExplorerWindow />
        <Thermometer>
          <svg width="18" height="56" viewBox="0 0 18 56">
            <rect x="2.500" y=".500" width="10" height="44" rx="3" fill="#3f5560" stroke="#35434b" />
            <circle cx="8" cy="48" r="7" fill="#3f5560" />
            <path d="M3.500 2.500q3-2 6 0" stroke="#8aa0ac" fill="none" />
            <rect x="5" y="14" width="2" height="34" fill="#e2541d" />
            <circle cx="6" cy="48" r="4" fill="#e07b10" />
          </svg>
        </Thermometer>
      </Viewport>
      <SystemBar />
    </Screen>
  );
}
